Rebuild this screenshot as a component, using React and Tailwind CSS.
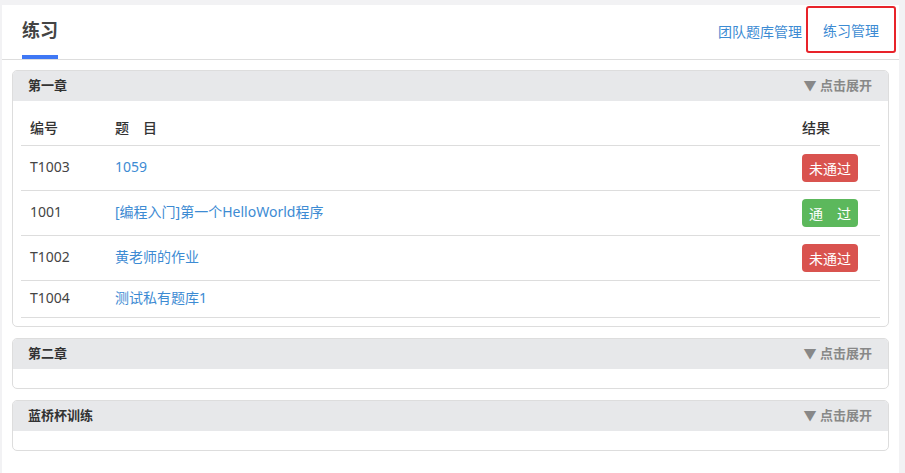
import React from "react";

const rows = [
	{ id: "T1003", title: "1059", result: "fail" },
	{ id: "1001", title: "[编程入门]第一个HelloWorld程序", result: "pass" },
	{ id: "T1002", title: "黄老师的作业", result: "fail" },
	{ id: "T1004", title: "测试私有题库1", result: null },
];

const Badge = ({ result }) => {
	if (result === "pass") {
		return (
			<span className="inline-flex items-center justify-center w-[56px] h-[28px] rounded-[4px] bg-[#5cb85c] text-white text-[14px]">
				通<span className="inline-block w-[14px]" />过
			</span>
		);
	}
	return (
		<span className="inline-flex items-center justify-center w-[56px] h-[28px] rounded-[4px] bg-[#d9534f] text-white text-[14px]">
			未通过
		</span>
	);
};

const SectionHeader = ({ title }) => (
	<div className="flex justify-between items-center h-[30px] bg-[#e7e8ea] px-[15px] rounded-t-[4px]">
		<span className="text-[13px] font-semibold text-[#333]">{title}</span>
		<span className="text-[13px] font-semibold text-[#888] pr-[1px]">▼ 点击展开</span>
	</div>
);

const App = () => {
	return (
		<div
			className="min-h-[473px] bg-[#f2f2f4] pt-[5px] pl-[2px] pr-[6px]"
			style={{ fontFamily: '"Noto Sans", "Noto Sans CJK SC", sans-serif' }}>
			<div className="bg-white min-h-[468px]">
				{/* Header */}
				<div className="flex justify-between h-[55px] border-b border-[#ddd] pl-[20px] pr-[3px]">
					<div className="flex flex-col justify-between">
						<h2 className="text-[18px] font-semibold text-[#444] pt-[13px] leading-[24px]">练习</h2>
						<div className="h-[4px] w-[36px] bg-[#3f78f5]" />
					</div>
					<div className="flex items-start text-[14px] text-[#3d8bd3]">
						<span className="mt-[15px] mr-[4px] leading-[24px] cursor-pointer">团队题库管理</span>
						<span className="mt-[1px] w-[90px] h-[47px] border-2 border-[#e8232a] rounded-[3px] flex items-center justify-center leading-[24px] pt-[3px] cursor-pointer">
							练习管理
						</span>
					</div>
				</div>

				<div className="px-[10px] pt-[10px] flex flex-col gap-[11px]">
					{/* Chapter 1 */}
					<div className="border border-[#ddd] rounded-[5px]">
						<SectionHeader title="第一章" />
						<div className="px-[8px] pt-[9px] pb-[8px]">
							<table className="w-full text-[14px] text-[#444] border-collapse table-fixed">
								<thead>
									<tr className="border-b border-[#ddd]">
										<th className="text-left font-medium text-[#333] py-[8px] pl-[9px] w-[94px] leading-[19px]">编号</th>
										<th className="text-left font-medium text-[#333] py-[8px] leading-[19px]">
											题<span className="inline-block w-[14px]" />目
										</th>
										<th className="text-left font-medium text-[#333] py-[8px] w-[78px] leading-[19px]">结果</th>
									</tr>
								</thead>
								<tbody>
									{rows.map((row) => (
										<tr key={row.id} className="border-b border-[#ddd]">
											<td className={`pl-[9px] pb-[3px] ${row.result ? "h-[45px]" : "h-[37px]"}`}>{row.id}</td>
											<td className="text-[#3d8bd3] pb-[3px] cursor-pointer">{row.title}</td>
											<td>{row.result && <Badge result={row.result} />}</td>
										</tr>
									))}
								</tbody>
							</table>
						</div>
					</div>

					{/* Chapter 2 */}
					<div className="border border-[#ddd] rounded-[5px]">
						<SectionHeader title="第二章" />
						<div className="h-[19px]" />
					</div>

					{/* Lanqiao */}
					<div className="border border-[#ddd] rounded-[5px]">
						<SectionHeader title="蓝桥杯训练" />
						<div className="h-[19px]" />
					</div>
				</div>
			</div>
		</div>
	);
};

export default App;
